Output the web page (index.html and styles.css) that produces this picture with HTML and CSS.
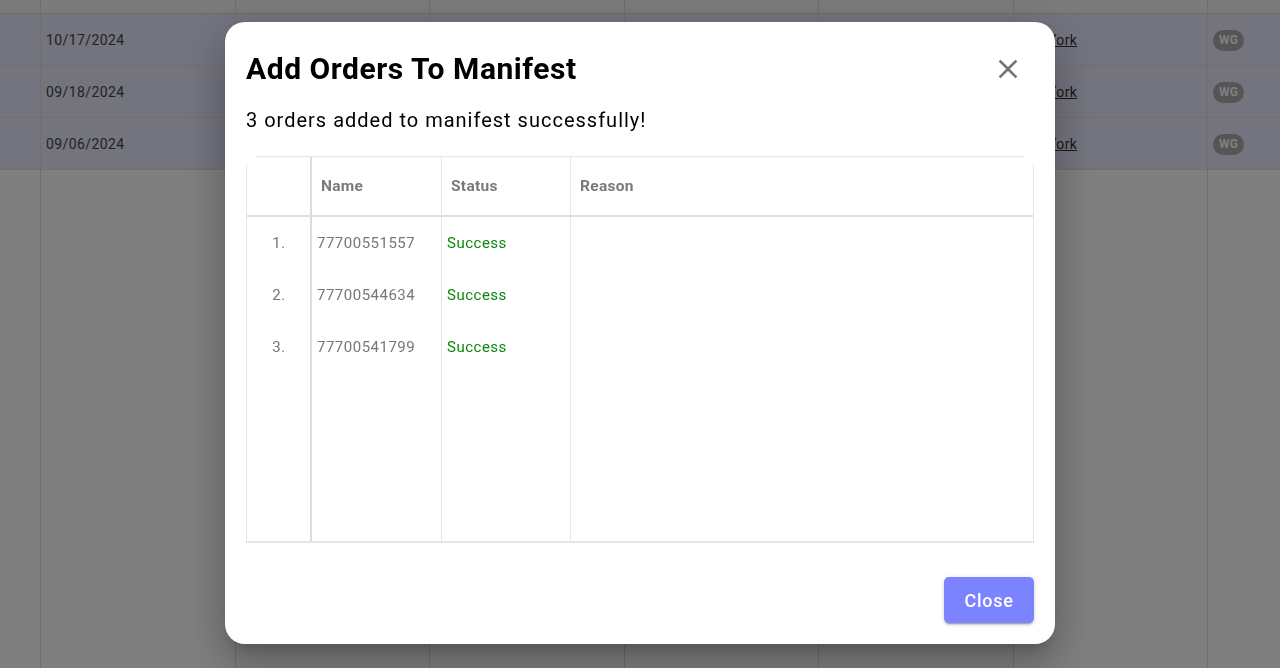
FILE: index.html
```html
<!DOCTYPE html>
<html lang="en">
<head>
<meta charset="utf-8">
<title>Add Orders To Manifest</title>
<link rel="stylesheet" href="styles.css">
</head>
<body>
<div class="page">
  <div class="bg-grid">
    <div class="c hd"></div><div class="c hd"></div><div class="c hd"></div><div class="c hd"></div><div class="c hd"></div><div class="c hd"></div><div class="c hd"></div><div class="c hd last"></div>

    <div class="c sel"></div><div class="c sel"><span class="date">10/17/2024</span></div><div class="c sel"></div><div class="c sel"></div><div class="c sel"></div><div class="c sel"></div><div class="c sel loc-cell"><a class="loc">New York</a></div><div class="c sel last"><span class="chip">WG</span></div>

    <div class="c sel"></div><div class="c sel"><span class="date">09/18/2024</span></div><div class="c sel"></div><div class="c sel"></div><div class="c sel"></div><div class="c sel"></div><div class="c sel loc-cell"><a class="loc">New York</a></div><div class="c sel last"><span class="chip">WG</span></div>

    <div class="c sel"></div><div class="c sel"><span class="date">09/06/2024</span></div><div class="c sel"></div><div class="c sel"></div><div class="c sel"></div><div class="c sel"></div><div class="c sel loc-cell"><a class="loc">New York</a></div><div class="c sel last"><span class="chip">WG</span></div>

    <div class="c fill"></div><div class="c fill"></div><div class="c fill"></div><div class="c fill"></div><div class="c fill"></div><div class="c fill"></div><div class="c fill"></div><div class="c fill last"></div>
  </div>
</div>

<div class="overlay">
  <div class="modal" role="dialog" aria-labelledby="dlg-title">
    <div class="modal-head">
      <h2 id="dlg-title" class="modal-title">Add Orders To Manifest</h2>
      <button class="icon-btn" aria-label="close">
        <svg viewBox="0 0 24 24" width="32" height="32"><path d="M19 6.41 17.59 5 12 10.59 6.41 5 5 6.41 10.59 12 5 17.59 6.41 19 12 13.41 17.59 19 19 17.59 13.41 12z" fill="currentColor"/></svg>
      </button>
    </div>
    <p class="modal-msg">3 orders added to manifest successfully!</p>

    <div class="grid-topline"></div>
    <div class="grid">
      <div class="gh num"></div>
      <div class="gh">Name</div>
      <div class="gh">Status</div>
      <div class="gh">Reason</div>

      <div class="gc num">1.</div>
      <div class="gc">77700551557</div>
      <div class="gc ok">Success</div>
      <div class="gc"></div>

      <div class="gc num">2.</div>
      <div class="gc">77700544634</div>
      <div class="gc ok">Success</div>
      <div class="gc"></div>

      <div class="gc num">3.</div>
      <div class="gc">77700541799</div>
      <div class="gc ok">Success</div>
      <div class="gc"></div>

      <div class="gc num"></div>
      <div class="gc"></div>
      <div class="gc"></div>
      <div class="gc"></div>
    </div>

    <div class="modal-foot">
      <button class="btn-primary">Close</button>
    </div>
  </div>
</div>
</body>
</html>
```

FILE: styles.css
```css
* { box-sizing: border-box; }

html, body {
  margin: 0;
  padding: 0;
  height: 100%;
  overflow: hidden;
  font-family: Roboto, "Liberation Sans", Arial, sans-serif;
  background: #ffffff;
}

/* ---------- background page ---------- */
.page {
  height: 668px;
}

.bg-grid {
  display: grid;
  grid-template-columns: 41px repeat(6, 194.5px) 1fr;
  grid-template-rows: 14px 52px 52px 52px 1fr;
  height: 100%;
}

.c {
  border-right: 1px solid #dedede;
  border-bottom: 1px solid #dedede;
  display: flex;
  align-items: center;
  padding-left: 5px;
  font-size: 14px;
  color: #444;
}
.c.last { border-right: none; }
.c.hd { background: #f6f6f6; border-bottom: 1px solid #d6d6d6; }
.c.sel { background: #e8e8fe; }
.c.fill { border-bottom: none; }
.c.loc-cell { padding-left: 2px; }

.date { letter-spacing: 0.4px; color: #444; }
.loc { color: #333; text-decoration: underline; letter-spacing: 0.3px; }

.chip {
  display: inline-flex;
  align-items: center;
  justify-content: center;
  width: 31px;
  height: 21px;
  margin-top: 1px;
  border-radius: 11px;
  background: #aaaaaa;
  color: #ffffff;
  font-size: 12px;
  font-weight: 700;
  letter-spacing: 0.2px;
}

/* ---------- overlay + modal ---------- */
.overlay {
  position: fixed;
  inset: 0;
  background: rgba(0, 0, 0, 0.5);
  display: flex;
  align-items: center;
  justify-content: center;
}

.modal {
  width: 830px;
  margin-bottom: 2px;
  background: #ffffff;
  border-radius: 20px;
  padding: 29px 21px 21px;
  display: flex;
  flex-direction: column;
  box-shadow: 0 11px 15px -7px rgba(0,0,0,0.2), 0 24px 38px 3px rgba(0,0,0,0.14), 0 9px 46px 8px rgba(0,0,0,0.12);
}

.modal-head {
  display: flex;
  align-items: center;
  justify-content: space-between;
  height: 36px;
}

.modal-title {
  margin: 0;
  font-size: 30px;
  line-height: 36px;
  font-weight: 700;
  color: #000;
  letter-spacing: 0.55px;
}

.icon-btn {
  width: 32px;
  height: 32px;
  margin-right: 10px;
  padding: 0;
  border: none;
  background: transparent;
  color: #757575;
  display: flex;
  align-items: center;
  justify-content: center;
  cursor: pointer;
}
.icon-btn svg { display: block; }

.modal-msg {
  margin: 19px 0 22px;
  font-size: 20px;
  line-height: 28px;
  color: #000;
  letter-spacing: 1px;
}

/* ---------- results grid ---------- */
.grid-topline {
  height: 1px;
  margin: 0 10px;
  background: #e6e6e6;
}

.grid {
  position: relative;
  display: grid;
  grid-template-columns: 66px 130px 129px 1fr;
  grid-template-rows: 60px 52px 52px 52px 1fr;
  height: 386px;
  border-bottom: 2px solid #e6e6e6;
}
.grid::after {
  content: "";
  position: absolute;
  top: 8px;
  bottom: 0;
  left: 0;
  right: 0;
  border-left: 1px solid #e6e6e6;
  border-right: 1px solid #e6e6e6;
  pointer-events: none;
}

.gh, .gc {
  border-right: 1px solid #e6e6e6;
  display: flex;
  align-items: center;
}
.gh:nth-child(4n), .gc:nth-child(4n) { border-right: none; }
.gh.num, .gc.num { border-right: 2px solid #dcdcdc; justify-content: center; }

.gh {
  border-bottom: 2px solid #dedede;
  padding-left: 9px;
  font-size: 15.5px;
  font-weight: 700;
  color: #7a7a7a;
  letter-spacing: 0.3px;
}

.gc {
  padding-left: 5px;
  font-size: 15px;
  color: #777;
  letter-spacing: 0.5px;
}
.gc.num { padding-left: 2px; padding-right: 0; }
.gc.ok { color: #0a8a0a; }

/* ---------- footer ---------- */
.modal-foot {
  display: flex;
  justify-content: flex-end;
  margin-top: 34px;
}

.btn-primary {
  height: 46px;
  padding: 0 20.5px;
  border: none;
  border-radius: 5px;
  background: #7b83ff;
  color: #ffffff;
  font-family: Roboto, "Liberation Sans", Arial, sans-serif;
  font-size: 18px;
  font-weight: 500;
  letter-spacing: 0.7px;
  cursor: pointer;
  box-shadow: 0 3px 1px -2px rgba(0,0,0,0.2), 0 2px 2px 0 rgba(0,0,0,0.14), 0 1px 5px 0 rgba(0,0,0,0.12);
}
```
